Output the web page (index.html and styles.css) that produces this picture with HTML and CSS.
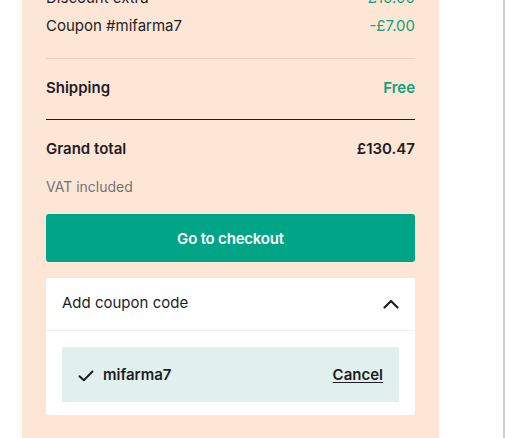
FILE: index.html
```html
<!DOCTYPE html>
<html>
<head>
<meta charset="utf-8">
<link rel="stylesheet" href="styles.css">
</head>
<body>
<div class="page">
  <div class="gutter"></div>
  <aside class="summary">
    <div class="lines">
      <div class="row"><span>Discount extra</span><span class="green">-£10.00</span></div>
      <div class="row"><span>Coupon #mifarma7</span><span class="green">-£7.00</span></div>
    </div>
    <div class="shipping">
      <div class="row strong"><span>Shipping</span><span class="green">Free</span></div>
    </div>
    <div class="total">
      <div class="row strong"><span>Grand total</span><span>£130.47</span></div>
      <div class="vat">VAT included</div>
    </div>
    <button class="checkout">Go to checkout</button>
    <div class="coupon">
      <div class="coupon-head">
        <span>Add coupon code</span>
        <svg class="chev" width="16" height="10" viewBox="0 0 16 10"><path d="M1.5 8.5 L8 2 L14.5 8.5" fill="none" stroke="#1d1d26" stroke-width="2.2" stroke-linecap="round" stroke-linejoin="round"/></svg>
      </div>
      <div class="coupon-body">
        <div class="applied">
          <div class="code">
            <svg class="check" width="16" height="12" viewBox="0 0 16 12"><path d="M1.5 6.2 L5.8 10.3 L14.5 1.5" fill="none" stroke="#1d1d26" stroke-width="2" stroke-linecap="round" stroke-linejoin="round"/></svg>
            <span>mifarma7</span>
          </div>
          <a class="cancel" href="#">Cancel</a>
        </div>
      </div>
    </div>
  </aside>
  <div class="blank"></div>
  <div class="scrollbar"></div>
</div>
</body>
</html>
```

FILE: styles.css
```css
html, body {
  margin: 0;
  padding: 0;
  height: 100%;
  overflow: hidden;
  background: #ffffff;
}
body {
  font-family: Inter, "Noto Sans", Arial, sans-serif;
  color: #1d1d26;
  font-size: 15px;
  line-height: 20px;
}
.page {
  display: flex;
  height: 438px;
}
.gutter {
  width: 22px;
  flex: none;
}
.summary {
  width: 417px;
  flex: none;
  background: #fde6d6;
  padding: 0 24px;
  box-sizing: border-box;
}
.blank {
  flex: 1;
}
.scrollbar {
  width: 2px;
  background: #cfcfcf;
}
.row {
  display: flex;
  justify-content: space-between;
  height: 20px;
}
.green {
  color: #10a07c;
}
.strong {
  font-weight: 600;
}
.lines {
  margin-top: -12px;
  display: flex;
  flex-direction: column;
  gap: 8px;
  padding-bottom: 22px;
  border-bottom: 1px solid #ecd3c3;
}
.shipping {
  padding: 19px 0 21px;
  border-bottom: 1px solid #1d1d26;
}
.total {
  padding-top: 19px;
}
.vat {
  margin-top: 18px;
  font-size: 14px;
  color: #737373;
}
.checkout {
  display: flex;
  align-items: center;
  justify-content: center;
  width: 100%;
  height: 48px;
  margin-top: 17px;
  border: none;
  border-radius: 3px;
  background: #00a587;
  color: #ffffff;
  font-family: inherit;
  font-size: 15px;
  font-weight: 600;
  letter-spacing: -0.2px;
}
.coupon {
  margin-top: 16px;
  background: #ffffff;
  border-radius: 3px;
}
.coupon-head {
  display: flex;
  justify-content: space-between;
  align-items: center;
  padding: 15px 16px 17px;
  border-bottom: 1px solid #f1f1f1;
}
.chev {
  margin-top: 1px;
}
.coupon-body {
  padding: 16px 16px 13px;
}
.applied {
  display: flex;
  justify-content: space-between;
  align-items: center;
  background: #e1f0ed;
  padding: 18px 16px 17px;
}
.code {
  display: flex;
  align-items: center;
  gap: 9px;
  font-weight: 600;
}
.check {
  margin-top: 1px;
}
.cancel {
  color: #1d1d26;
  font-weight: 600;
  text-decoration: underline;
  text-underline-offset: 2px;
}
```
